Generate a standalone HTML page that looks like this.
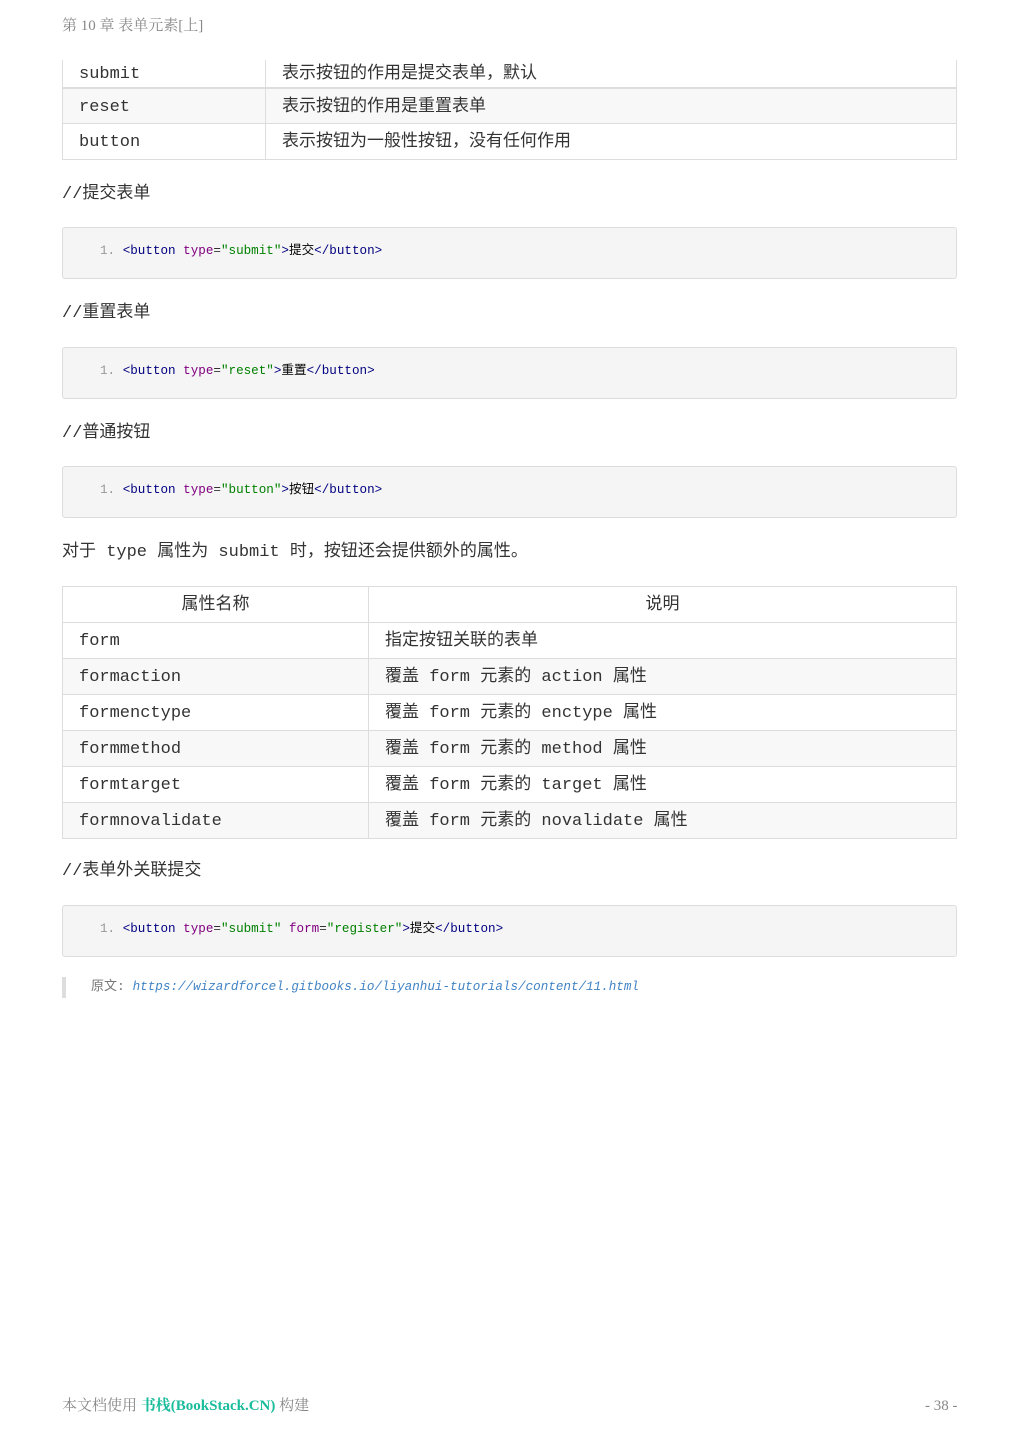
<!DOCTYPE html>
<html><head><meta charset="utf-8"><style>
body{margin:0;width:1019px;height:1440px;background:#fff;position:relative;font-family:"Liberation Mono","WenQuanYi Zen Hei",monospace;color:#333;font-size:17px;}
.a{position:absolute;white-space:nowrap;line-height:20px;}
table{position:absolute;left:62px;width:895px;border-collapse:collapse;font-size:17px;}
td,th{border:1px solid #ddd;padding:3px 16px 0;height:32px;text-align:left;line-height:20px;vertical-align:middle;white-space:nowrap;}
th{font-weight:normal;text-align:center;}
tr.s td{background:#f8f8f8;}
.code{position:absolute;left:62px;width:893px;height:50px;background:#f5f5f5;border:1px solid #ddd;border-radius:3px;font-size:12.6px;}
.code div{position:absolute;left:37px;top:15px;white-space:nowrap;line-height:16px;}
.n{color:#999;}.t{color:#000080;}.k{color:#800080;}.v{color:#008000;}.x{color:#000;}
.serif{font-family:'Liberation Serif','Noto Serif CJK SC',serif;font-size:15px;color:#888;}
</style></head><body>
<div class="a serif" style="left:62px;top:16px;">第 10 章 表单元素[上]</div>

<table style="top:60px;">
<tr><td style="width:170px;border-top:none;height:25px;padding-top:2px;">submit</td><td style="border-top:none;height:25px;padding-top:2px;">表示按钮的作用是提交表单，默认</td></tr>
<tr class="s"><td style="border-top:2px solid #ddd;height:31px;">reset</td><td style="border-top:2px solid #ddd;height:31px;">表示按钮的作用是重置表单</td></tr>
<tr><td>button</td><td>表示按钮为一般性按钮，没有任何作用</td></tr>
</table>

<div class="a" style="left:62px;top:185px;">//提交表单</div>
<div class="code" style="top:227px;"><div><span class="n">1. </span> <span class="t">&lt;button</span> <span class="k">type</span>=<span class="v">"submit"</span><span class="t">&gt;</span><span class="x">提交</span><span class="t">&lt;/button&gt;</span></div></div>

<div class="a" style="left:62px;top:304px;">//重置表单</div>
<div class="code" style="top:347px;"><div><span class="n">1. </span> <span class="t">&lt;button</span> <span class="k">type</span>=<span class="v">"reset"</span><span class="t">&gt;</span><span class="x">重置</span><span class="t">&lt;/button&gt;</span></div></div>

<div class="a" style="left:62px;top:424px;">//普通按钮</div>
<div class="code" style="top:466px;"><div><span class="n">1. </span> <span class="t">&lt;button</span> <span class="k">type</span>=<span class="v">"button"</span><span class="t">&gt;</span><span class="x">按钮</span><span class="t">&lt;/button&gt;</span></div></div>

<div class="a" style="left:62px;top:543px;">对于 type 属性为 submit 时，按钮还会提供额外的属性。</div>

<table style="top:586px;">
<tr><th style="width:273px;">属性名称</th><th>说明</th></tr>
<tr><td>form</td><td>指定按钮关联的表单</td></tr>
<tr class="s"><td>formaction</td><td>覆盖 form 元素的 action 属性</td></tr>
<tr><td>formenctype</td><td>覆盖 form 元素的 enctype 属性</td></tr>
<tr class="s"><td>formmethod</td><td>覆盖 form 元素的 method 属性</td></tr>
<tr><td>formtarget</td><td>覆盖 form 元素的 target 属性</td></tr>
<tr class="s"><td>formnovalidate</td><td>覆盖 form 元素的 novalidate 属性</td></tr>
</table>

<div class="a" style="left:62px;top:862px;">//表单外关联提交</div>
<div class="code" style="top:905px;"><div><span class="n">1. </span> <span class="t">&lt;button</span> <span class="k">type</span>=<span class="v">"submit"</span> <span class="k">form</span>=<span class="v">"register"</span><span class="t">&gt;</span><span class="x">提交</span><span class="t">&lt;/button&gt;</span></div></div>

<div class="a" style="left:62px;top:977px;width:4px;height:21px;background:#ddd;"></div>
<div class="a" style="left:91px;top:977px;font-size:13px;color:#777;">原文: <span style="font-style:italic;color:#4183c4;font-size:12.6px;">https://wizardforcel.gitbooks.io/liyanhui-tutorials/content/11.html</span></div>

<div class="a serif" style="left:62px;top:1396px;">本文档使用 <b style="color:#1abc9c;">书栈(BookStack.CN)</b> 构建</div>
<div class="a serif" style="left:925px;top:1396px;">- 38 -</div>
</body></html>
